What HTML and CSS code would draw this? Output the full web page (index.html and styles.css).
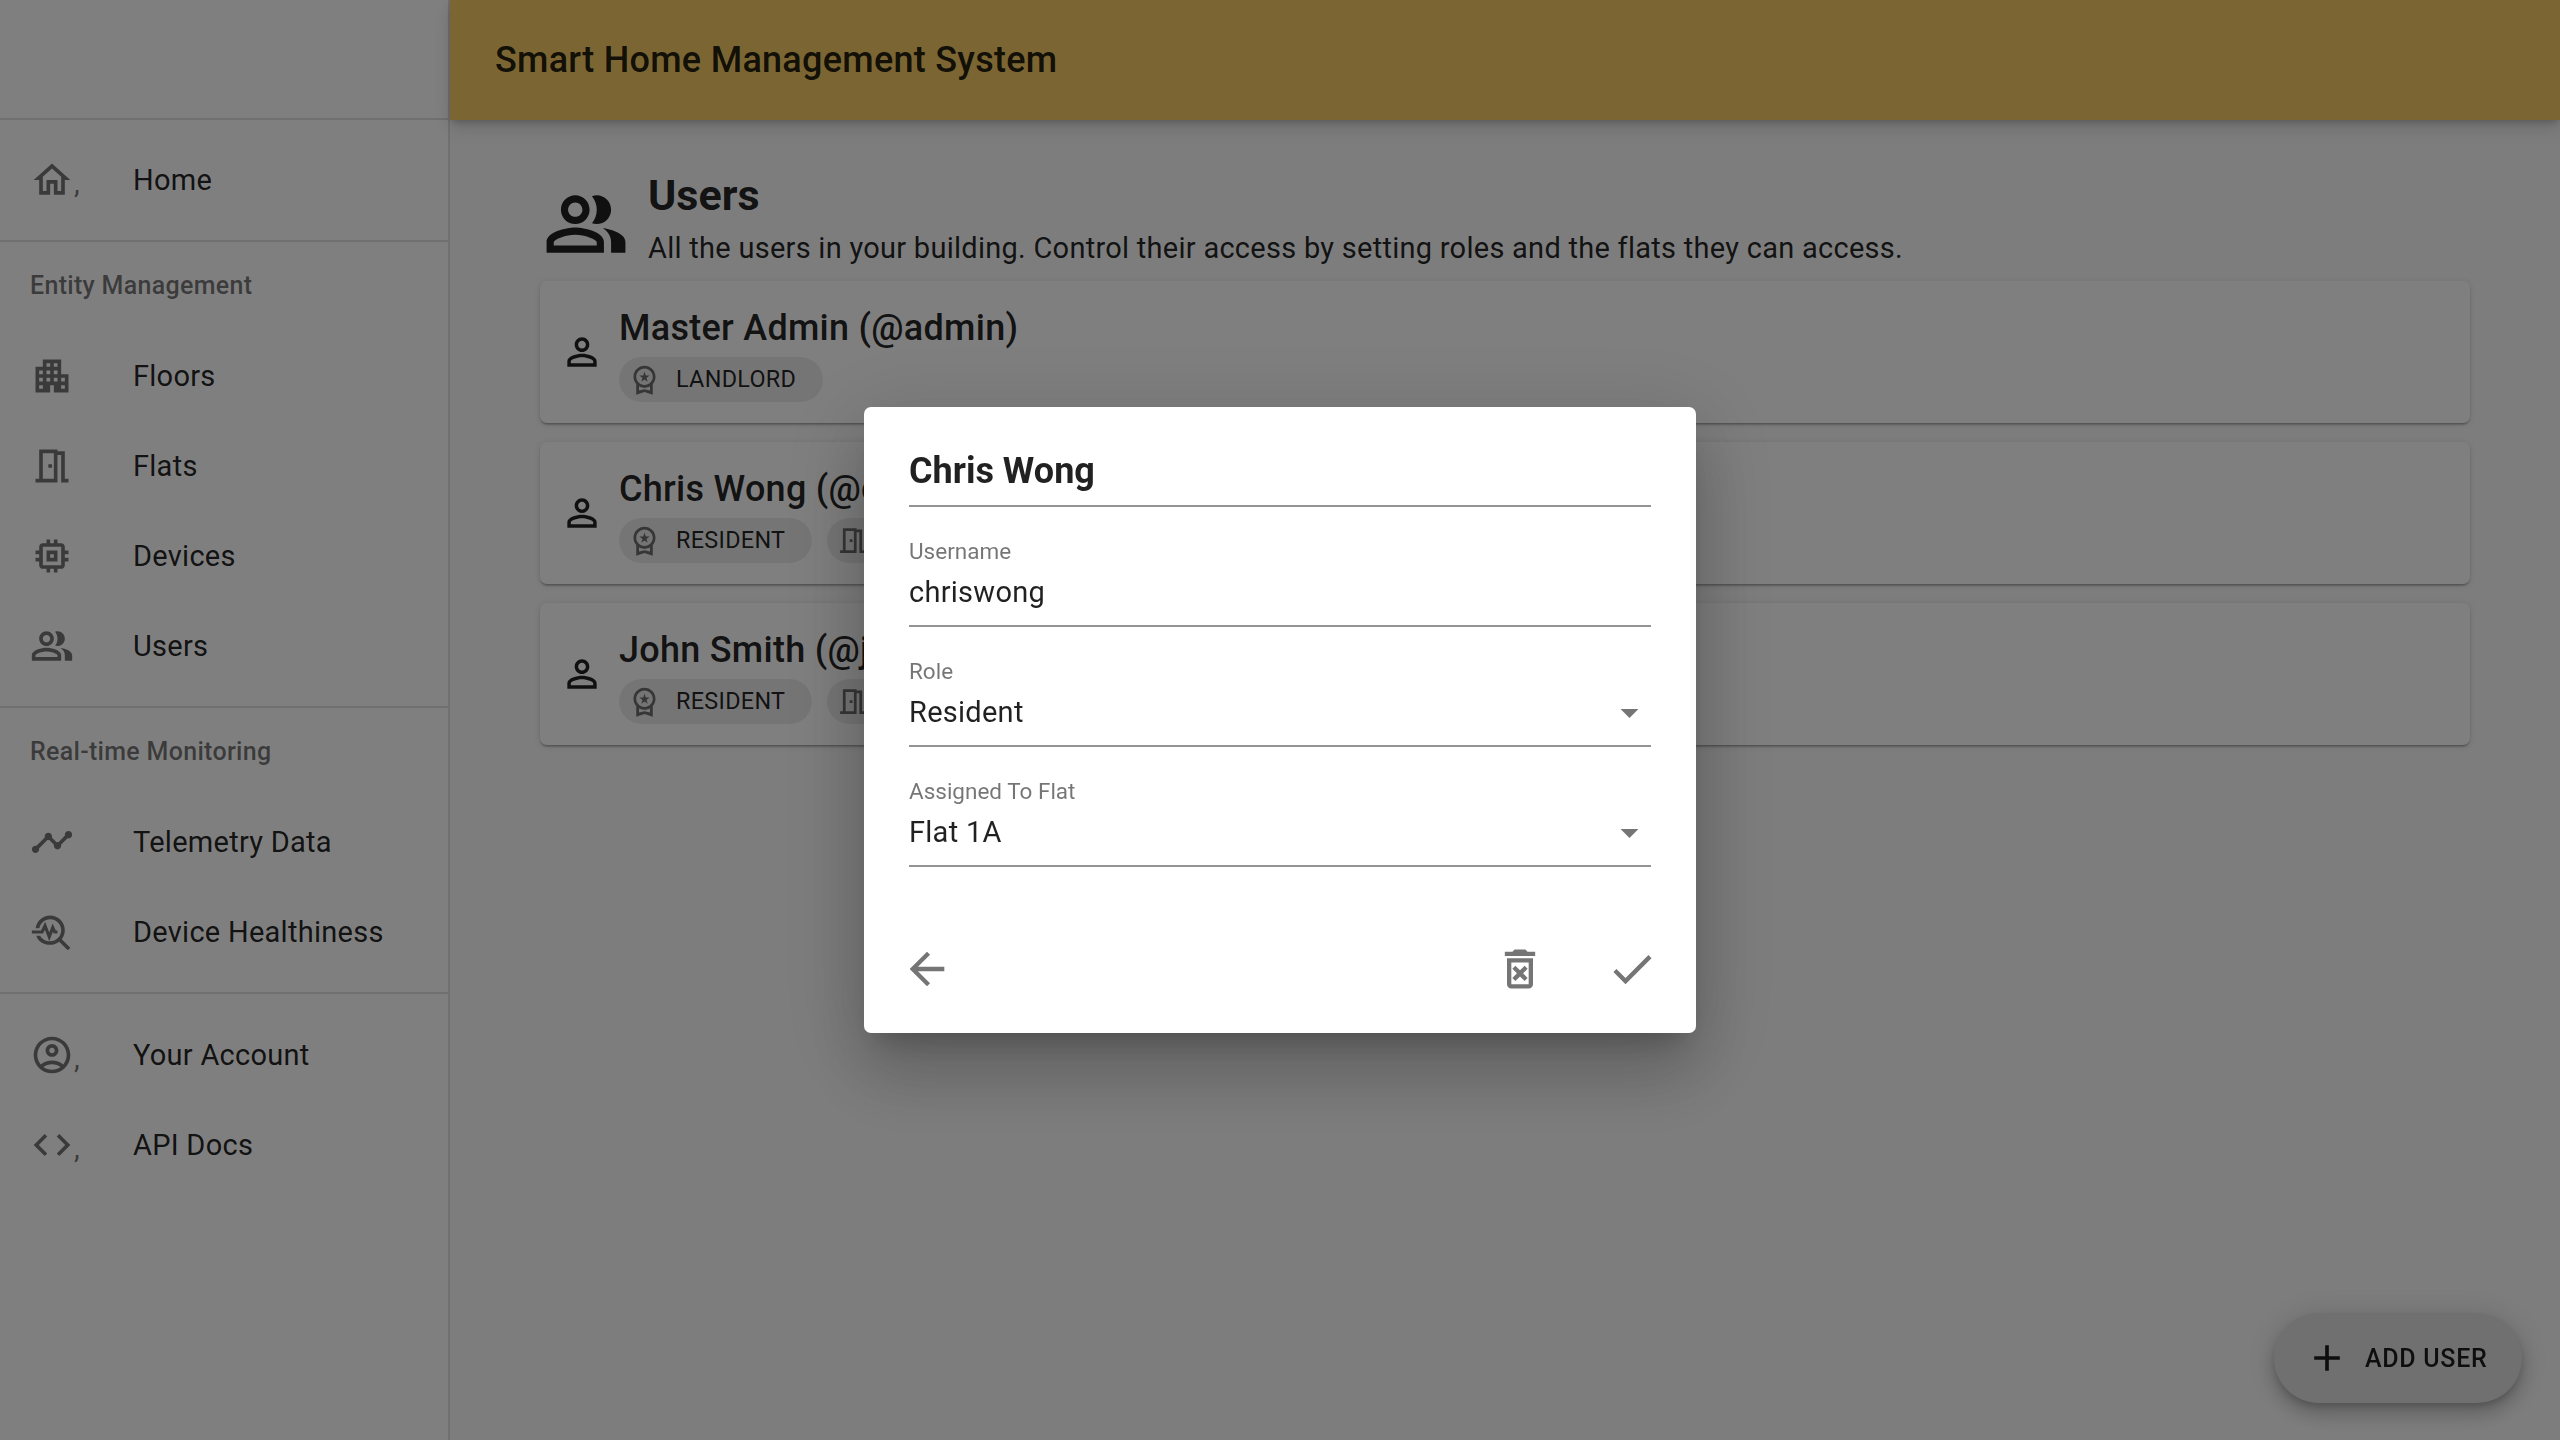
FILE: index.html
```html
<!DOCTYPE html>
<html lang="en">
<head>
<meta charset="utf-8">
<title>Smart Home Management System</title>
<link rel="stylesheet" href="styles.css">
</head>
<body>
<svg class="sprite" xmlns="http://www.w3.org/2000/svg">
  <symbol id="i-home" viewBox="0 0 24 24"><path d="M12 5.69l5 4.5V18h-2v-6H9v6H7v-7.81l5-4.5M12 3L2 12h3v8h6v-6h2v6h6v-8h3L12 3z"/></symbol>
  <symbol id="i-apartment" viewBox="0 0 24 24"><path d="M17 11V3H7v4H3v14h8v-4h2v4h8V11h-4zM7 19H5v-2h2v2zm0-4H5v-2h2v2zm0-4H5V9h2v2zm4 4H9v-2h2v2zm0-4H9V9h2v2zm0-4H9V5h2v2zm4 8h-2v-2h2v2zm0-4h-2V9h2v2zm0-4h-2V5h2v2zm4 12h-2v-2h2v2zm0-4h-2v-2h2v2z"/></symbol>
  <symbol id="i-door" viewBox="0 0 24 24"><path d="M19 19V4h-4V3H5v16H3v2h12V6h2v15h4v-2h-2zm-6 0H7V5h6v14zm-3-8h2v2h-2z"/></symbol>
  <symbol id="i-memory" viewBox="0 0 24 24"><path d="M15 9H9v6h6V9zm-2 4h-2v-2h2v2zm8-2V9h-2V7c0-1.1-.9-2-2-2h-2V3h-2v2h-2V3H9v2H7c-1.1 0-2 .9-2 2v2H3v2h2v2H3v2h2v2c0 1.1.9 2 2 2h2v2h2v-2h2v2h2v-2h2c1.1 0 2-.9 2-2v-2h2v-2h-2v-2h2zm-4 6H7V7h10v10z"/></symbol>
  <symbol id="i-people" viewBox="0 0 24 24"><path d="M16.67 13.13C18.04 14.06 19 15.32 19 17v3h4v-3c0-2.18-3.57-3.47-6.33-3.87zM15 12c2.21 0 4-1.79 4-4s-1.79-4-4-4c-.47 0-.91.1-1.33.24C14.5 5.27 15 6.58 15 8s-.5 2.73-1.33 3.76c.42.14.86.24 1.33.24zM9 12c2.21 0 4-1.79 4-4s-1.79-4-4-4-4 1.79-4 4 1.79 4 4 4zm0-6c1.1 0 2 .9 2 2s-.9 2-2 2-2-.9-2-2 .9-2 2-2zM9 13c-2.67 0-8 1.34-8 4v3h16v-3c0-2.66-5.33-4-8-4zm6 5H3v-.99C3.2 16.29 6.3 15 9 15s5.8 1.29 6 2v1z"/></symbol>
  <symbol id="i-timeline" viewBox="0 0 24 24"><path d="M23 8c0 1.1-.9 2-2 2-.18 0-.35-.02-.51-.07l-3.56 3.55c.05.16.07.34.07.52 0 1.1-.9 2-2 2s-2-.9-2-2c0-.18.02-.36.07-.52l-2.55-2.55c-.16.05-.34.07-.52.07s-.36-.02-.52-.07l-4.55 4.56c.05.16.07.33.07.51 0 1.1-.9 2-2 2s-2-.9-2-2 .9-2 2-2c.18 0 .35.02.51.07l4.56-4.55C8.02 9.36 8 9.18 8 9c0-1.1.9-2 2-2s2 .9 2 2c0 .18-.02.36-.07.52l2.55 2.55c.16-.05.34-.07.52-.07s.36.02.52.07l3.55-3.56C19.02 8.35 19 8.18 19 8c0-1.1.9-2 2-2s2 .9 2 2z"/></symbol>
  <symbol id="i-health" viewBox="0 0 24 24"><path d="M22 20.59l-4.69-4.69C18.37 14.55 19 12.85 19 11c0-4.42-3.58-8-8-8-4.08 0-7.44 3.05-7.93 7h2.02C5.57 7.17 8.03 5 11 5c3.31 0 6 2.69 6 6s-2.69 6-6 6c-2.42 0-4.5-1.1-5.45-3H3.4c1.05 3.19 4.06 5 7.6 5 1.85 0 3.55-.63 4.9-1.69L20.59 22 22 20.59z"/><path class="pulse" d="M1 12h5.6l1.6-3.4 2.3 6 1.9-5 1.1 2.4H15"/></symbol>
  <symbol id="i-account" viewBox="0 0 24 24"><path d="M12 2C6.48 2 2 6.48 2 12s4.48 10 10 10 10-4.48 10-10S17.52 2 12 2zM7.35 18.5C8.66 17.56 10.26 17 12 17s3.34.56 4.65 1.5c-1.31.94-2.91 1.5-4.65 1.5s-3.34-.56-4.65-1.5zm10.79-1.38C16.45 15.8 14.32 15 12 15s-4.45.8-6.14 2.12C4.7 15.73 4 13.95 4 12c0-4.42 3.58-8 8-8s8 3.58 8 8c0 1.95-.7 3.73-1.86 5.12zM12 6c-1.93 0-3.5 1.57-3.5 3.5S10.07 13 12 13s3.5-1.57 3.5-3.5S13.93 6 12 6zm0 5c-.83 0-1.5-.67-1.5-1.5S11.17 8 12 8s1.5.67 1.5 1.5S12.83 11 12 11z"/></symbol>
  <symbol id="i-code" viewBox="0 0 24 24"><path d="M9.4 16.6L4.8 12l4.6-4.6L8 6l-6 6 6 6 1.4-1.4zm5.2 0l4.6-4.6-4.6-4.6L16 6l6 6-6 6-1.4-1.4z"/></symbol>
  <symbol id="i-person" viewBox="0 0 24 24"><path d="M12 5.9c1.16 0 2.1.94 2.1 2.1s-.94 2.1-2.1 2.1S9.9 9.16 9.9 8s.94-2.1 2.1-2.1m0 9c2.97 0 6.1 1.46 6.1 2.1v1.1H5.9V17c0-.64 3.13-2.1 6.1-2.1M12 4C9.79 4 8 5.79 8 8s1.79 4 4 4 4-1.79 4-4-1.79-4-4-4zm0 9c-2.67 0-8 1.34-8 4v3h16v-3c0-2.66-5.33-4-8-4z"/></symbol>
  <symbol id="i-premium" viewBox="0 0 24 24"><path d="M9.68 13.69L12 11.93l2.31 1.76-.88-2.85L15.75 9h-2.84L12 6.19 11.09 9H8.25l2.31 1.84-.88 2.85zM20 10c0-4.42-3.58-8-8-8s-8 3.58-8 8c0 2.03.76 3.87 2 5.28V23l6-2 6 2v-7.72c1.24-1.41 2-3.25 2-5.28zm-8-6c3.31 0 6 2.69 6 6s-2.69 6-6 6-6-2.69-6-6 2.69-6 6-6zm0 15l-4 1.02v-3.1c1.18.68 2.54 1.08 4 1.08s2.82-.4 4-1.08v3.1L12 19z"/></symbol>
  <symbol id="i-add" viewBox="0 0 24 24"><path d="M19 13h-6v6h-2v-6H5v-2h6V5h2v6h6v2z"/></symbol>
  <symbol id="i-back" viewBox="0 0 24 24"><path d="M20 11H7.83l5.59-5.59L12 4l-8 8 8 8 1.41-1.41L7.83 13H20v-2z"/></symbol>
  <symbol id="i-delete" viewBox="0 0 24 24"><path d="M14.12 10.47L12 12.59l-2.13-2.12-1.41 1.41L10.59 14l-2.12 2.12 1.41 1.41L12 15.41l2.12 2.12 1.41-1.41L13.41 14l2.12-2.12zM15.5 4l-1-1h-5l-1 1H5v2h14V4zM6 19c0 1.1.9 2 2 2h8c1.1 0 2-.9 2-2V7H6v12zM8 9h8v10H8V9z"/></symbol>
  <symbol id="i-check" viewBox="0 0 24 24"><path d="M9 16.17L4.83 12l-1.42 1.41L9 19 21 7l-1.41-1.41z"/></symbol>
  <symbol id="i-drop" viewBox="0 0 24 24"><path d="M7 10l5 5 5-5z"/></symbol>
</svg>

<div class="app">
  <aside class="sidebar">
    <div class="sidebar-head"></div>
    <ul class="nav-group">
      <li class="nav-item"><span class="nav-icon"><svg class="icon"><use href="#i-home"/></svg>,</span>Home</li>
    </ul>
    <div class="nav-sub">Entity Management</div>
    <ul class="nav-group nav-group-sub">
      <li class="nav-item"><span class="nav-icon"><svg class="icon"><use href="#i-apartment"/></svg></span>Floors</li>
      <li class="nav-item"><span class="nav-icon"><svg class="icon"><use href="#i-door"/></svg></span>Flats</li>
      <li class="nav-item"><span class="nav-icon"><svg class="icon"><use href="#i-memory"/></svg></span>Devices</li>
      <li class="nav-item"><span class="nav-icon"><svg class="icon"><use href="#i-people"/></svg></span>Users</li>
    </ul>
    <div class="nav-sub">Real-time Monitoring</div>
    <ul class="nav-group nav-group-sub">
      <li class="nav-item"><span class="nav-icon"><svg class="icon"><use href="#i-timeline"/></svg></span>Telemetry Data</li>
      <li class="nav-item"><span class="nav-icon"><svg class="icon"><use href="#i-health"/></svg></span>Device Healthiness</li>
    </ul>
    <ul class="nav-group nav-group-last">
      <li class="nav-item"><span class="nav-icon"><svg class="icon"><use href="#i-account"/></svg>,</span>Your Account</li>
      <li class="nav-item"><span class="nav-icon"><svg class="icon"><use href="#i-code"/></svg>,</span>API Docs</li>
    </ul>
  </aside>

  <div class="main-col">
    <header class="appbar">Smart Home Management System</header>
    <main class="content">
      <div class="page-head">
        <svg class="page-icon"><use href="#i-people"/></svg>
        <div>
          <h1 class="page-title">Users</h1>
          <p class="page-desc">All the users in your building. Control their access by setting roles and the flats they can access.</p>
        </div>
      </div>
      <section class="cards">
        <article class="card">
          <svg class="card-icon"><use href="#i-person"/></svg>
          <div class="card-body">
            <h2 class="card-name">Master Admin (@admin)</h2>
            <div class="chips">
              <span class="chip"><svg class="chip-icon"><use href="#i-premium"/></svg>LANDLORD</span>
            </div>
          </div>
        </article>
        <article class="card">
          <svg class="card-icon"><use href="#i-person"/></svg>
          <div class="card-body">
            <h2 class="card-name">Chris Wong (@chriswong)</h2>
            <div class="chips">
              <span class="chip"><svg class="chip-icon"><use href="#i-premium"/></svg>RESIDENT</span>
              <span class="chip"><svg class="chip-icon"><use href="#i-door"/></svg>FLAT 1A</span>
            </div>
          </div>
        </article>
        <article class="card">
          <svg class="card-icon"><use href="#i-person"/></svg>
          <div class="card-body">
            <h2 class="card-name">John Smith (@johnsmith)</h2>
            <div class="chips">
              <span class="chip"><svg class="chip-icon"><use href="#i-premium"/></svg>RESIDENT</span>
              <span class="chip"><svg class="chip-icon"><use href="#i-door"/></svg>FLAT 1B</span>
            </div>
          </div>
        </article>
      </section>
    </main>
  </div>
</div>

<button class="fab" type="button"><svg class="fab-icon"><use href="#i-add"/></svg>ADD USER</button>

<div class="backdrop">
  <div class="dialog">
    <h2 class="dialog-title">Chris Wong</h2>
    <div class="field">
      <label class="field-label">Username</label>
      <div class="field-value">chriswong</div>
    </div>
    <div class="field">
      <label class="field-label">Role</label>
      <div class="field-value">Resident<svg class="drop"><use href="#i-drop"/></svg></div>
    </div>
    <div class="field">
      <label class="field-label">Assigned To Flat</label>
      <div class="field-value">Flat 1A<svg class="drop"><use href="#i-drop"/></svg></div>
    </div>
    <div class="dialog-actions">
      <svg class="action action-back"><use href="#i-back"/></svg>
      <div class="action-right">
        <svg class="action"><use href="#i-delete"/></svg>
        <svg class="action"><use href="#i-check"/></svg>
      </div>
    </div>
  </div>
</div>
</body>
</html>
```

FILE: styles.css
```css
* { box-sizing: border-box; }
html, body { margin: 0; height: 100%; }
body {
  font-family: Roboto, "Liberation Sans", sans-serif;
  color: rgba(0, 0, 0, .87);
  background: #fafafa;
  overflow: hidden;
}
.sprite { display: none; }
.pulse { fill: none; stroke: currentColor; stroke-width: 1.7; }
svg { fill: currentColor; display: block; flex: none; }
h1, h2, p, ul { margin: 0; padding: 0; list-style: none; }

.app { display: flex; height: 1440px; }

.sidebar {
  width: 450px;
  flex: none;
  background: #fff;
  border-right: 2px solid rgba(0, 0, 0, .12);
}
.sidebar-head { height: 120px; border-bottom: 2px solid rgba(0, 0, 0, .12); }
.nav-group { padding: 15px 0 15px; border-bottom: 2px solid rgba(0, 0, 0, .12); }
.nav-group-sub { padding-top: 0; }
.nav-group-last { border-bottom: 0; padding-top: 16px; }
.nav-item {
  display: flex;
  align-items: center;
  height: 90px;
  padding-left: 30px;
  font-size: 29px;
  letter-spacing: .27px;
}
.nav-icon {
  display: flex;
  align-items: flex-end;
  width: 103px;
  flex: none;
  color: rgba(0, 0, 0, .54);
  line-height: 38px;
}
.icon { width: 44px; height: 44px; }
.nav-sub {
  height: 89px;
  line-height: 88px;
  padding-left: 30px;
  font-size: 25px;
  font-weight: 500;
  letter-spacing: .3px;
  color: rgba(0, 0, 0, .54);
}

.main-col { flex: 1; min-width: 0; }
.appbar {
  height: 120px;
  padding-left: 45px;
  background: #f6cd66;
  font-size: 36px;
  font-weight: 500;
  line-height: 120px;
  letter-spacing: .27px;
  box-shadow: 0 4px 7px -2px rgba(0, 0, 0, .2), 0 7px 18px 0 rgba(0, 0, 0, .14);
  position: relative;
}
.content { padding: 45px 90px 0; }
.page-head { display: flex; align-items: flex-start; gap: 19px; padding-left: 3px; }
.page-icon { width: 86px; height: 86px; margin-top: 16px; }
.page-title { font-size: 43px; font-weight: 700; line-height: 60px; }
.page-desc { font-size: 29px; line-height: 46px; letter-spacing: .27px; }

.cards { display: flex; flex-direction: column; gap: 19px; margin-top: 10px; }
.card {
  display: flex;
  align-items: center;
  height: 142px;
  padding-left: 20px;
  background: #fff;
  border-radius: 7px;
  box-shadow: 0 3px 2px -2px rgba(0, 0, 0, .2), 0 2px 2px 0 rgba(0, 0, 0, .14), 0 1px 6px 0 rgba(0, 0, 0, .12);
}
.card-icon { width: 44px; height: 44px; }
.card-body { margin-left: 15px; }
.card-name { font-size: 36px; font-weight: 500; line-height: 50px; letter-spacing: .27px; }
.chips { display: flex; gap: 15px; margin-top: 4px; }
.chip {
  display: flex;
  align-items: center;
  height: 45px;
  padding: 0 27px 0 9px;
  border-radius: 23px;
  background: rgba(0, 0, 0, .08);
  font-size: 23.4px;
  letter-spacing: .3px;
}
.chip-icon { width: 33px; height: 33px; margin-right: 15px; color: rgba(0, 0, 0, .54); }

.fab {
  position: fixed;
  left: 2274px;
  top: 1313px;
  display: flex;
  align-items: center;
  width: 248px;
  height: 90px;
  padding: 0 0 0 31px;
  border: 0;
  border-radius: 45px;
  background: #e0e0e0;
  color: rgba(0, 0, 0, .87);
  font-family: inherit;
  font-size: 25px;
  font-weight: 500;
  letter-spacing: .7px;
  box-shadow: 0 5px 9px -2px rgba(0, 0, 0, .2), 0 11px 18px 2px rgba(0, 0, 0, .14), 0 2px 32px 2px rgba(0, 0, 0, .12);
}
.fab-icon { width: 44px; height: 44px; margin-right: 16px; }

.backdrop {
  position: fixed;
  inset: 0;
  display: flex;
  align-items: center;
  justify-content: center;
  background: rgba(0, 0, 0, .5);
}
.dialog {
  width: 832px;
  height: 626px;
  padding: 0 45px;
  background: #fff;
  border-radius: 7px;
  box-shadow: 0 20px 27px -13px rgba(0, 0, 0, .2), 0 43px 68px 5px rgba(0, 0, 0, .14), 0 16px 83px 14px rgba(0, 0, 0, .12);
}
.dialog-title {
  height: 100px;
  padding-top: 36px;
  font-size: 36px;
  font-weight: 700;
  line-height: 56px;
  border-bottom: 2px solid rgba(0, 0, 0, .42);
}
.field { height: 120px; padding-top: 30px; border-bottom: 2px solid rgba(0, 0, 0, .42); }
.field-label { display: block; font-size: 22.5px; line-height: 28px; color: rgba(0, 0, 0, .54); }
.field-value {
  display: flex;
  align-items: center;
  justify-content: space-between;
  height: 46px;
  margin-top: 4px;
  padding-right: 0;
  font-size: 29px;
  letter-spacing: .27px;
}
.drop { width: 43px; height: 43px; margin-right: 0; color: rgba(0, 0, 0, .54); }

.dialog-actions { display: flex; align-items: center; justify-content: space-between; margin-top: 76px; color: rgba(0, 0, 0, .54); }
.action { width: 52px; height: 52px; }
.action-back { margin-left: -8px; }
.action-right { display: flex; gap: 60px; margin-right: -7px; }
```
